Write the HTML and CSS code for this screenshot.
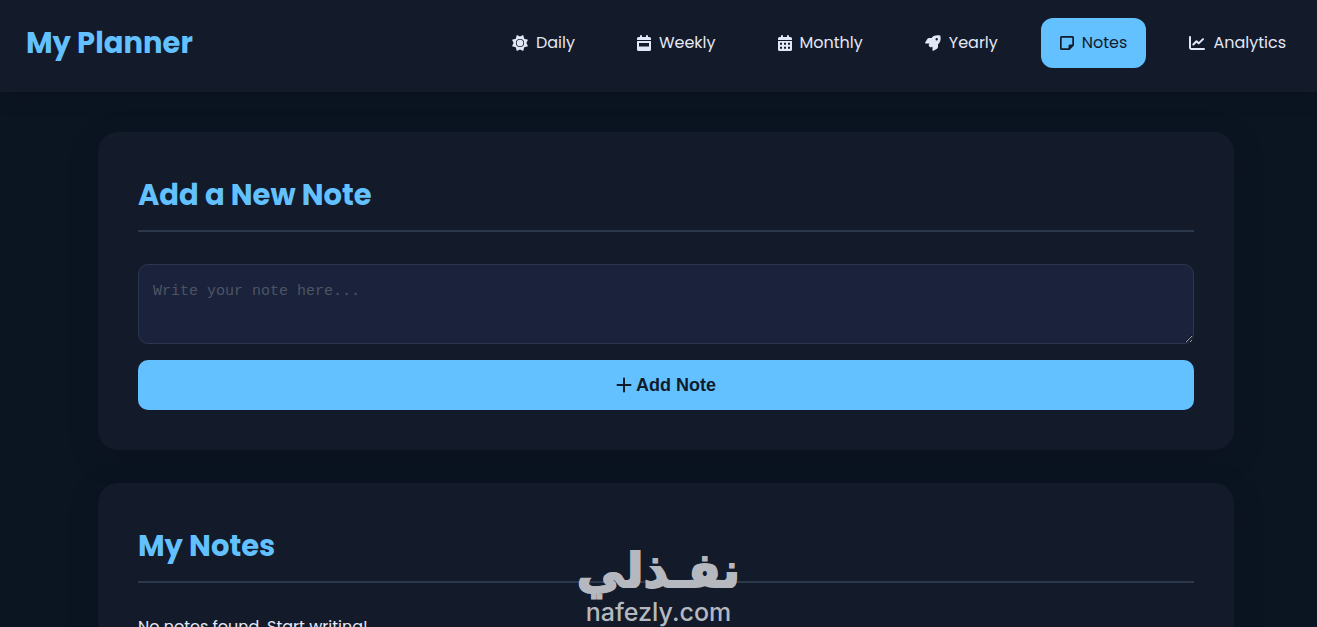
FILE: index.html
```html
<!DOCTYPE html>
<html lang="en">
<head>
<meta charset="utf-8">
<meta name="viewport" content="width=device-width, initial-scale=1">
<title>My Planner</title>
<link rel="stylesheet" href="styles.css">
</head>
<body>
<header class="topbar">
  <h1 class="brand">My Planner</h1>
  <nav class="nav">
    <a class="nav-link" href="#daily"><svg class="icon" viewBox="0 0 16 16" aria-hidden="true"><path fill-rule="evenodd" d="M8 1.600 11.200 0l1 3.800L16 4.800 14.400 8l1.600 3.200-3.800 1-1 3.800L8 14.400 4.800 16l-1-3.800L0 11.200 1.600 8 0 4.800l3.800-1L4.800 0ZM8 3.900a4.100 4.100 0 1 0 0 8.200 4.100 4.100 0 0 0 0-8.200Z"/><circle cx="8" cy="8" r="3.300"/></svg>Daily</a>
    <a class="nav-link" href="#weekly"><svg class="icon icon-narrow" viewBox="1 0 14 16" aria-hidden="true"><path fill-rule="evenodd" d="M4 1a1 1 0 0 1 2 0v1h4V1a1 1 0 0 1 2 0v1h1.500A1.500 1.500 0 0 1 15 3.500V5H1V3.500A1.500 1.500 0 0 1 2.500 2H4ZM1 6h14v8.500a1.500 1.500 0 0 1-1.500 1.500h-11A1.500 1.500 0 0 1 1 14.500Zm2 2v3.500h10V8Z"/></svg>Weekly</a>
    <a class="nav-link" href="#monthly"><svg class="icon icon-narrow" viewBox="1 0 14 16" aria-hidden="true"><path fill-rule="evenodd" d="M4 1a1 1 0 0 1 2 0v1h4V1a1 1 0 0 1 2 0v1h1.500A1.500 1.500 0 0 1 15 3.500V5H1V3.500A1.500 1.500 0 0 1 2.500 2H4ZM1 6h14v8.500a1.500 1.500 0 0 1-1.500 1.500h-11A1.500 1.500 0 0 1 1 14.500ZM3 7.700v2h2v-2Zm4 0v2h2v-2Zm4 0v2h2v-2Zm-8 4v2h2v-2Zm4 0v2h2v-2Zm4 0v2h2v-2Z"/></svg>Monthly</a>
    <a class="nav-link" href="#yearly"><svg class="icon" viewBox="0 0 16 16" aria-hidden="true"><path fill-rule="evenodd" d="M4.900 12 4 11.100c-.3-.3-.4-.7-.2-1.200L4.300 8.500H.7c-.5 0-.8-.5-.5-1L2.300 4a2 2 0 0 1 1.700-1h2.600C9 .1 12 .1 15.100.6c.2 0 .3.200.3.300.5 3.100.5 6.100-2.400 8.500V12a2 2 0 0 1-1 1.700l-3.500 2.100c-.5.300-1 0-1-.5v-3.600l-1.400.5c-.4.200-.9.100-1.200-.2ZM11.700 5.500a1.200 1.200 0 1 0 0-2.400 1.200 1.200 0 0 0 0 2.400Z"/></svg>Yearly</a>
    <a class="nav-link nav-link-active" href="#notes" aria-current="page"><svg class="icon icon-narrow" viewBox="1 0 14 16" aria-hidden="true"><path fill-rule="evenodd" d="M2.500 1h11A1.500 1.500 0 0 1 15 2.500v8L10.500 15h-8A1.500 1.500 0 0 1 1 13.500v-11A1.500 1.500 0 0 1 2.500 1Zm.2 1.700v10.600H9.500V11A1.500 1.500 0 0 1 11 9.500h2.300V2.700Z"/></svg>Notes</a>
    <a class="nav-link" href="#analytics"><svg class="icon icon-line" viewBox="0 0 16 16" aria-hidden="true"><path d="M1 2v10.500A1.500 1.500 0 0 0 2.500 14H15M4.300 9.500 7.500 6.200l2.200 2.200L14 4.100"/></svg>Analytics</a>
  </nav>
</header>

<main class="page">
  <section class="card">
    <h2 class="card-title">Add a New Note</h2>
    <form class="note-form">
      <textarea class="note-input" aria-label="Note" placeholder="Write your note here..."></textarea>
      <button class="add-button" type="button"><svg class="icon icon-line" viewBox="0 0 16 16" aria-hidden="true"><path d="M8 1.500v13M1.500 8h13"/></svg>Add Note</button>
    </form>
  </section>
  <section class="card">
    <h2 class="card-title">My Notes</h2>
    <p class="empty">No notes found. Start writing!</p>
  </section>
</main>

<div class="watermark">
  <span class="watermark-name" lang="ar" dir="rtl">نفـذلي</span>
  <span class="watermark-site">nafezly.com</span>
</div>
</body>
</html>
```
FILE: styles.css
```css
* {
  box-sizing: border-box;
}

body {
  margin: 0;
  height: 100vh;
  overflow: hidden;
  background: #0b1522;
  color: #e2e8f5;
  font: 16px/24px Poppins, Inter, sans-serif;
}

.topbar {
  position: relative;
  display: flex;
  justify-content: space-between;
  align-items: center;
  padding: 18px 12px 24px 26px;
  background: #131a2a;
  box-shadow: 0 4px 20px rgba(0, 0, 0, 0.2);
}

.brand {
  margin: 0;
  color: #64c1ff;
  font-size: 29px;
  line-height: 43px;
  font-weight: 700;
}

.nav {
  display: flex;
  gap: 24px;
}

.nav-link {
  display: flex;
  align-items: center;
  gap: 8px;
  padding: 13px 19px;
  border-radius: 12px;
  color: #e2e8f5;
  text-decoration: none;
}

.nav-link-active {
  background: #64c1ff;
  color: #131a2a;
}

.icon {
  width: 16px;
  height: 16px;
  flex: none;
  fill: currentColor;
}

.icon-narrow {
  width: 14px;
}

.icon-line {
  fill: none;
  stroke: currentColor;
  stroke-width: 2;
  stroke-linecap: round;
  stroke-linejoin: round;
}

.page {
  display: flex;
  flex-direction: column;
  gap: 33px;
  padding: 40px 83px 40px 98px;
}

.card {
  padding: 40px;
  border-radius: 20px;
  background: #131a2a;
  box-shadow: 0 8px 32px rgba(0, 0, 0, 0.2);
}

.card-title {
  margin: 0 0 32px;
  padding-bottom: 11px;
  border-bottom: 2px solid #2b374a;
  color: #64c1ff;
  font-size: 29px;
  line-height: 47px;
  font-weight: 700;
}

.note-form {
  display: flex;
  flex-direction: column;
  gap: 16px;
}

.note-input {
  display: block;
  width: 100%;
  height: 80px;
  padding: 16px 14px;
  border: 1px solid #2b374a;
  border-radius: 10px;
  background: #1a233b;
  color: #e2e8f5;
  font: 15px/21px "Liberation Mono", monospace;
  resize: vertical;
}

.note-input::placeholder {
  color: #4d5564;
}

.add-button {
  display: flex;
  align-items: center;
  justify-content: center;
  gap: 4px;
  height: 50px;
  border: 0;
  border-radius: 10px;
  background: #64c1ff;
  color: #101b2b;
  font: bold 18px/24px "Liberation Sans", Arial, sans-serif;
}

.empty {
  margin: 0;
}

.watermark {
  position: absolute;
  bottom: 0;
  left: 50%;
  display: flex;
  flex-direction: column;
  align-items: center;
  transform: translateX(-50%);
  color: #b5b9bf;
  pointer-events: none;
}

.watermark-name {
  font: bold 48px/54px "DejaVu Sans", sans-serif;
  -webkit-text-stroke: 2px #b5b9bf;
}

.watermark-site {
  font: 500 25px/30px Inter, sans-serif;
}
```
